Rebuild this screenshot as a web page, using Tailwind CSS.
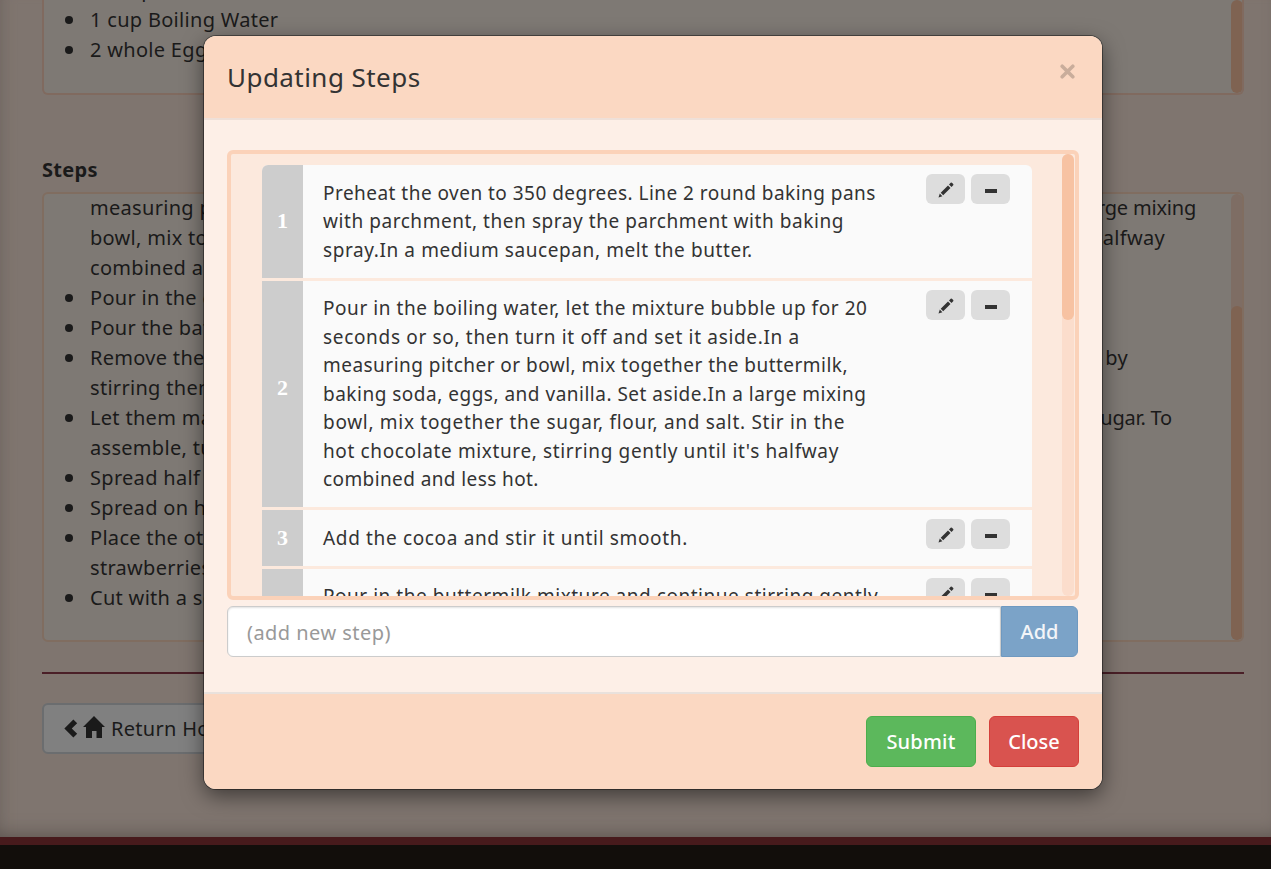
<!DOCTYPE html>
<html lang="en">
<head>
<meta charset="utf-8">
<title>Updating Steps</title>
<script src="https://cdn.jsdelivr.net/npm/@tailwindcss/browser@4"></script>
</head>
<body class="h-[869px] overflow-hidden bg-[#120e0b] font-['Noto_Sans',sans-serif] text-[#333]">
<svg class="hidden">
  <symbol id="pencil" viewBox="0 0 16 16"><path fill="#333" d="M.5 15.500 1.800 11.600 4.400 14.200ZM2.700 10.800 10 3.500 12.500 6 5.200 13.300ZM11 2.500 12.700.800Q13.300.300 13.900.800L15.200 2.100Q15.700 2.700 15.200 3.300L13.500 5Z"/></symbol>
</svg>
<div class="relative h-[869px] overflow-hidden">
  <main class="flex h-[845px] flex-col overflow-hidden border-b-8 border-[#471a1c] bg-[#7f756f] pl-[42px] pr-[27px] text-[20px] leading-[30px] tracking-[0.3px] text-[#1a1a1a] shadow-[inset_0_-14px_18px_-12px_#5c534e,inset_14px_0_14px_-12px_#746a65]">
    <section class="flex h-[95px] shrink-0 justify-between overflow-hidden rounded-b-md border-2 border-t-0 border-[#806a5f] bg-[#7e7974]">
      <ul class="-mt-[25px] whitespace-nowrap pl-[46px] [&>li]:relative [&>li]:before:absolute [&>li]:before:-left-[25px] [&>li]:before:top-[11px] [&>li]:before:size-2 [&>li]:before:rounded-full [&>li]:before:bg-[#1a1a1a]">
        <li>4 Tbsp Cocoa</li>
        <li>1 cup Boiling Water</li>
        <li>2 whole Eggs</li>
      </ul>
      <div class="-mr-px w-3 rounded-md bg-[#7f6352]"></div>
    </section>
    <h2 class="mt-[60px] font-bold tracking-[0.3px]">Steps</h2>
    <section class="mt-[7px] flex h-[450px] shrink-0 justify-between overflow-hidden rounded-md border-2 border-[#806d60] bg-[#7e7974]">
      <ul class="-mt-px w-[1152px] whitespace-nowrap pl-[46px] [&>li]:relative [&>li.dot]:before:absolute [&>li.dot]:before:-left-[25px] [&>li.dot]:before:top-[11px] [&>li.dot]:before:size-2 [&>li.dot]:before:rounded-full [&>li.dot]:before:bg-[#1a1a1a]">
        <li class="flex justify-between"><span>measuring pitcher</span><span class="-tracking-[0.2px]">large mixing</span></li>
        <li class="flex w-[1075px] justify-between"><span>bowl, mix together</span><span>halfway</span></li>
        <li>combined and less</li>
        <li class="dot">Pour in the cocoa</li>
        <li class="dot">Pour the batter</li>
        <li class="dot flex w-[1038px] justify-between"><span>Remove the cakes</span><span>by</span></li>
        <li>stirring them</li>
        <li class="dot flex w-[1082px] justify-between"><span>Let them macerate</span><span class="-tracking-[0.2px]">sugar. To</span></li>
        <li>assemble, turn</li>
        <li class="dot">Spread half the</li>
        <li class="dot">Spread on half</li>
        <li class="dot">Place the other</li>
        <li>strawberries</li>
        <li class="dot">Cut with a serrated</li>
      </ul>
      <div class="-mr-px flex w-3 items-end rounded-md bg-[#7e6d64]"><div class="h-[334px] w-3 rounded-md bg-[#7f6352]"></div></div>
    </section>
    <hr class="mt-[30px] shrink-0 border-t-2 border-[#4a1f27]">
    <button class="mt-[29px] flex h-[51px] w-[250px] shrink-0 items-center rounded-md border-2 border-[#6b6d6f] bg-[#808080] pl-5 text-left">
      <svg class="mr-[5px] h-[19px] w-[14px]" viewBox="0 0 14 20"><path d="M9.500.500 13.500 4.500 7.800 10 13.500 15.500 9.500 19.500 0 10Z" fill="#1a1a1a"/></svg>
      <svg class="-mt-[4px] mr-[6px] size-[22px]" viewBox="0 0 22 22"><path d="M11 0 22 11H19V22H13.500V15H9V22H3V11H0Z" fill="#1a1a1a"/></svg>
      <span class="whitespace-nowrap">Return Home</span>
    </button>
  </main>

  <div class="absolute left-[204px] top-[36px] flex h-[753px] w-[898px] flex-col overflow-hidden rounded-xl bg-[#fdefe7] shadow-[0_0_0_1px_rgba(0,0,0,.4),0_7px_21px_rgba(0,0,0,.5)]">
    <header class="flex h-[84px] shrink-0 items-center justify-between border-b-2 border-[#efe0d8] bg-[#fbd8c2] px-[23px]">
      <h1 class="text-[26px] tracking-[0.45px]">Updating Steps</h1>
      <svg class="-mt-3 mr-1 size-[15px]" viewBox="0 0 15 15"><path d="M2.200 2.200 12.800 12.800M12.800 2.200 2.200 12.800" stroke="#c9ad9b" stroke-width="3.600" stroke-linecap="round"/></svg>
    </header>
    <div class="h-[572px] shrink-0 px-[23px] pt-[30px]">
      <div class="flex h-[450px] w-[852px] justify-between overflow-hidden rounded-md border-4 border-[#fbd2b9] bg-[#fce9dd]">
        <ol class="ml-[31px] mt-[11px] flex w-[770px] shrink-0 flex-col gap-[3px] whitespace-nowrap text-[19px] leading-[28.57px] [&>li]:flex [&>li]:shrink-0 [&>li]:overflow-hidden [&>li]:bg-[#fafafa] [&_b]:flex [&_b]:w-[41px] [&_b]:items-center [&_b]:justify-center [&_b]:bg-[#cdcdcd] [&_b]:font-['Liberation_Serif',serif] [&_b]:text-[22px] [&_b]:text-white [&_p]:ml-5 [&_p]:w-[603px] [&_p]:pt-[13.500px] [&_span]:block [&_div]:flex [&_div]:gap-[6px] [&_div]:pt-[9px] [&_button]:flex [&_button]:h-[30px] [&_button]:w-[39px] [&_button]:items-center [&_button]:justify-center [&_button]:rounded-md [&_button]:bg-[#ddd]">
          <li class="h-[112.500px] rounded-t-md">
            <b>1</b>
            <p>
              <span class="tracking-[0.47px]">Preheat the oven to 350 degrees. Line 2 round baking pans</span>
              <span class="tracking-[0.56px]">with parchment, then spray the parchment with baking</span>
              <span class="tracking-[0.59px]">spray.In a medium saucepan, melt the butter.</span>
            </p>
            <div><button aria-label="Edit"><svg class="mt-[2px] size-4"><use href="#pencil"/></svg></button><button aria-label="Remove"><i class="mt-1 h-1 w-3 bg-[#333]"></i></button></div>
          </li>
          <li class="h-[226.600px]">
            <b class="pb-[12px]">2</b>
            <p>
              <span class="tracking-[0.55px]">Pour in the boiling water, let the mixture bubble up for 20</span>
              <span class="tracking-[0.67px]">seconds or so, then turn it off and set it aside.In a</span>
              <span class="tracking-[0.47px]">measuring pitcher or bowl, mix together the buttermilk,</span>
              <span class="tracking-[0.5px]">baking soda, eggs, and vanilla. Set aside.In a large mixing</span>
              <span class="tracking-[0.7px]">bowl, mix together the sugar, flour, and salt. Stir in the</span>
              <span class="tracking-[0.63px]">hot chocolate mixture, stirring gently until it's halfway</span>
              <span class="tracking-[0.4px]">combined and less hot.</span>
            </p>
            <div><button aria-label="Edit"><svg class="mt-[2px] size-4"><use href="#pencil"/></svg></button><button aria-label="Remove"><i class="mt-1 h-1 w-3 bg-[#333]"></i></button></div>
          </li>
          <li class="h-[55.600px]">
            <b>3</b>
            <p><span class="tracking-[0.65px]">Add the cocoa and stir it until smooth.</span></p>
            <div><button aria-label="Edit"><svg class="mt-[2px] size-4"><use href="#pencil"/></svg></button><button aria-label="Remove"><i class="mt-1 h-1 w-3 bg-[#333]"></i></button></div>
          </li>
          <li class="h-[84px]">
            <b></b>
            <p><span class="tracking-[0.53px]">Pour in the buttermilk mixture and continue stirring gently</span></p>
            <div><button aria-label="Edit"><svg class="mt-[2px] size-4"><use href="#pencil"/></svg></button><button aria-label="Remove"><i class="mt-1 h-1 w-3 bg-[#333]"></i></button></div>
          </li>
        </ol>
        <div class="mr-px w-3 rounded-md bg-[#fbddcc]"><div class="h-[166px] rounded-md bg-[#f7c2a2]"></div></div>
      </div>
      <div class="mt-[6px] flex h-[51px] text-[20px]">
        <div class="flex w-[774px] items-center rounded-l-md border border-[#ccc] bg-white pl-[19px] pt-[3px] tracking-[0.45px] text-[#999] shadow-[inset_0_1px_2px_rgba(0,0,0,.12)]">(add new step)</div>
        <button class="w-[77px] rounded-r-md border border-[#6f99c0] bg-[#7ba3c8] font-medium text-[#f3f5f8]">Add</button>
      </div>
    </div>
    <footer class="flex h-[97px] items-center justify-end gap-[13px] border-t-2 border-[#e9e1dc] bg-[#fbd8c2] px-[23px] text-[20px] font-medium text-white">
      <button class="h-[51px] w-[110px] rounded-md border border-[#4cae4c] bg-[#5cb85c] tracking-[0.2px]">Submit</button>
      <button class="h-[51px] w-[90px] rounded-md border border-[#d43f3a] bg-[#d9534f]">Close</button>
    </footer>
  </div>
</div>
</body>
</html>
